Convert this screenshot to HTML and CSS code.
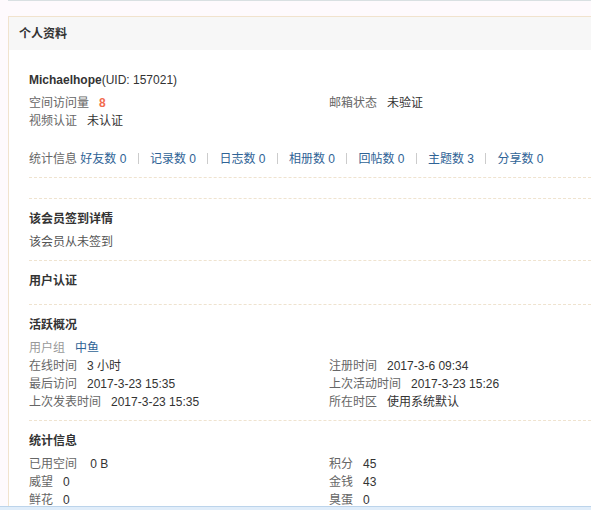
FILE: index.html
```html
<!DOCTYPE html>
<html lang="zh-CN">
<head>
<meta charset="utf-8">
<title>个人资料</title>
<link rel="stylesheet" href="styles.css">
</head>
<body>
<div class="topline"></div>
<div class="box">
  <div class="box-h">个人资料</div>
  <div class="box-c">
    <div class="sec sec-first">
      <h2 class="uname">Michaelhope<span class="uid">(UID: 157021)</span></h2>
      <ul class="cols">
        <li><em>空间访问量</em><strong class="hot">8</strong></li>
        <li><em>邮箱状态</em>未验证</li>
        <li><em>视频认证</em>未认证</li>
      </ul>
      <div class="stats"><span class="stats-label">统计信息</span> <a href="#">好友数 0</a><span class="pipe"></span><a href="#">记录数 0</a><span class="pipe"></span><a href="#">日志数 0</a><span class="pipe"></span><a href="#">相册数 0</a><span class="pipe"></span><a href="#">回帖数 0</a><span class="pipe"></span><a href="#">主题数 3</a><span class="pipe"></span><a href="#">分享数 0</a></div>
    </div>
    <div class="sec"></div>
    <div class="sec">
      <h2>该会员签到详情</h2>
      <p class="row">该会员从未签到</p>
    </div>
    <div class="sec">
      <h2>用户认证</h2>
    </div>
    <div class="sec">
      <h2>活跃概况</h2>
      <ul class="cols">
        <li class="full"><em class="light">用户组</em><a href="#">中鱼</a></li>
        <li><em>在线时间</em>3 小时</li>
        <li><em>注册时间</em>2017-3-6 09:34</li>
        <li><em>最后访问</em>2017-3-23 15:35</li>
        <li><em>上次活动时间</em>2017-3-23 15:26</li>
        <li><em>上次发表时间</em>2017-3-23 15:35</li>
        <li><em>所在时区</em>使用系统默认</li>
      </ul>
    </div>
    <div class="sec">
      <h2>统计信息</h2>
      <ul class="cols">
        <li><em>已用空间</em> 0 B</li>
        <li><em>积分</em>45</li>
        <li><em>威望</em>0</li>
        <li><em>金钱</em>43</li>
        <li><em>鲜花</em>0</li>
        <li><em>臭蛋</em>0</li>
      </ul>
    </div>
  </div>
</div>
<div class="bottombar"></div>
</body>
</html>
```
FILE: styles.css
```css
html, body {
  margin: 0;
  padding: 0;
}
body {
  background: #fefafd;
  font-family: "Liberation Sans", "Noto Sans CJK SC", sans-serif;
  font-size: 12px;
  color: #333;
}
ul, p, h2 {
  margin: 0;
  padding: 0;
  list-style: none;
}
a {
  color: #2f6396;
  text-decoration: none;
}
.topline {
  margin-left: 8px;
  height: 1px;
  background: #d9e0e2;
}
.box {
  margin: 15px 0 0 8px;
  border-top: 1px solid #f1e3ce;
  border-left: 1px solid #f1e3ce;
  background: #fff;
  overflow: hidden;
}
.box-h {
  height: 33px;
  line-height: 34px;
  padding-left: 10px;
  background: #f7f7f7;
  font-weight: bold;
  color: #333;
}
.box-c {
  padding: 10px 0 0 20px;
  overflow: hidden;
}
.sec {
  padding: 1px 0 9px;
  margin-bottom: 10px;
  border-bottom: 1px dashed #efe3cf;
}
.sec-first {
  padding-top: 11px;
}
h2 {
  font-size: 12px;
  line-height: 18px;
  font-weight: bold;
  margin-bottom: 5px;
  color: #333;
}
.uid {
  font-weight: normal;
}
.cols {
  display: grid;
  grid-template-columns: 300px 300px;
}
.cols li, .row {
  line-height: 18px;
  color: #333;
  white-space: nowrap;
}
.cols li.full {
  grid-column: 1 / span 2;
}
.cols em {
  font-style: normal;
  color: #666;
  margin-right: 10px;
}
.cols em.light {
  color: #999;
}
.row {
  color: #555;
}
.hot {
  color: #f26c4f;
  font-weight: bold;
}
.stats {
  margin-top: 20px;
  line-height: 18px;
  white-space: nowrap;
}
.stats-label {
  color: #666;
}
.pipe {
  display: inline-block;
  width: 1px;
  height: 11px;
  background: #cccccc;
  margin: 0 11.25px;
  vertical-align: -1px;
}
.bottombar {
  position: fixed;
  left: 0;
  right: 0;
  bottom: 0;
  height: 3px;
  border-top: 1px solid #bcd4eb;
  background: #e0edfa;
}
```
